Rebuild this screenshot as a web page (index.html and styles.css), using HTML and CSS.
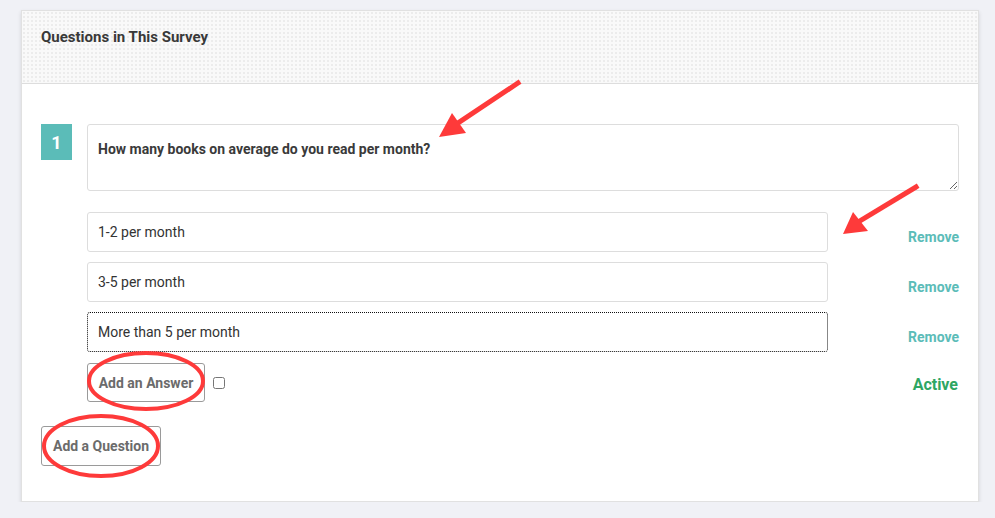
FILE: index.html
```html
<!DOCTYPE html>
<html lang="en">
<head>
    <meta charset="UTF-8">
    <meta name="viewport" content="width=device-width, initial-scale=1.0">
    <title>Questions in This Survey</title>
    <link rel="stylesheet" href="styles.css">
</head>
<body>
    <div class="card">
        <div class="card-header">
            <h2>Questions in This Survey</h2>
        </div>

        <div class="card-body">
            <!-- Question 1 -->
            <div class="question">
                <div class="number">1</div>
                <textarea class="question-text">How many books on average do you read per month?</textarea>
            </div>

            <div class="answers">
                <div class="answer">
                    <input type="text" value="1-2 per month">
                    <a href="#" class="remove">Remove</a>
                </div>
                <div class="answer">
                    <input type="text" value="3-5 per month">
                    <a href="#" class="remove">Remove</a>
                </div>
                <div class="answer">
                    <input type="text" class="focused" value="More than 5 per month">
                    <a href="#" class="remove">Remove</a>
                </div>
                <div class="answer-actions">
                    <button type="button" class="btn">Add an Answer</button>
                    <input type="checkbox" class="check">
                    <span class="active">Active</span>
                </div>
            </div>

            <button type="button" class="btn btn-question">Add a Question</button>
        </div>
    </div>

    <!-- annotations -->
    <svg class="marks" width="995" height="518" viewBox="0 0 995 518">
        <g stroke="#fe3a3a" stroke-width="5" stroke-linecap="square" fill="none">
            <line x1="518" y1="83" x2="455" y2="125"/>
            <line x1="916" y1="187" x2="858" y2="222"/>
        </g>
        <g fill="#fe3a3a">
            <polygon points="439,137 452,113 466,133"/>
            <polygon points="843,234 853,212 868,231"/>
        </g>
        <g stroke="#fe3a3a" stroke-width="4" fill="none">
            <ellipse cx="146" cy="381" rx="57" ry="28"/>
            <ellipse cx="101" cy="446" rx="57" ry="30"/>
        </g>
    </svg>
</body>
</html>
```
FILE: styles.css
```css
body {
    font-family: Roboto, "Liberation Sans", sans-serif;
    background-color: #f0f1f6;
    color: #333333;
    margin: 0;
    padding: 10px 0 0 21px;
}

.card {
    width: 956px;
    background-color: #ffffff;
    border: 1px solid #e1e1e1;
    box-shadow: 0 2px 4px rgba(0, 0, 0, 0.12);
}

.card-header {
    height: 72px;
    border-bottom: 1px solid #dddddd;
    background-color: #f9f9f9;
    background-image: radial-gradient(#ececec 1px, transparent 1px);
    background-size: 4px 4px;
    padding: 0 19px;
}

.card-header h2 {
    margin: 0;
    padding-top: 17px;
    font-size: 15px;
    font-weight: bold;
    line-height: 18px;
    color: #393939;
}

.card-body {
    padding: 40px 19px 35px 19px;
}

.question {
    display: flex;
    gap: 15px;
}

.number {
    width: 31px;
    height: 36px;
    background-color: #5bbcb8;
    color: #ffffff;
    font-size: 18px;
    font-weight: bold;
    display: flex;
    align-items: center;
    justify-content: center;
}

.question-text {
    flex: 1;
    height: 67px;
    box-sizing: border-box;
    border: 1px solid #dddddd;
    border-radius: 3px;
    padding: 16px 10px;
    font-family: inherit;
    font-size: 14px;
    font-weight: bold;
    color: #3a3a3a;
    resize: vertical;
    margin: 0;
}

.answers {
    margin: 21px 0 0 46px;
    display: flex;
    flex-direction: column;
    gap: 10px;
}

.answer {
    display: flex;
    align-items: center;
}

.answer input {
    width: 741px;
    height: 40px;
    box-sizing: border-box;
    border: 1px solid #dddddd;
    border-radius: 3px;
    padding: 0 10px;
    font-family: inherit;
    font-size: 14px;
    color: #333333;
    margin: 0;
}

.answer input.focused {
    border: 1px dotted #111111;
}

.remove {
    margin-left: auto;
    padding-top: 9px;
    color: #5bbcb8;
    font-size: 14px;
    font-weight: bold;
    text-decoration: none;
}

.answer-actions {
    display: flex;
    align-items: center;
    margin-top: 1px;
}

.btn {
    height: 39px;
    width: 118px;
    padding: 0;
    background-color: #ffffff;
    border: 1px solid #9a9a9a;
    border-radius: 3px;
    font-family: inherit;
    font-size: 14px;
    font-weight: bold;
    color: #6b6b6b;
    cursor: pointer;
}

.check {
    width: 12px;
    height: 12px;
    margin: 0 0 0 8px;
}

.active {
    margin-left: auto;
    padding-top: 4px;
    color: #2ea663;
    font-size: 16px;
    font-weight: bold;
    padding-right: 1px;
}

.btn-question {
    margin-top: 24px;
    height: 40px;
    width: 120px;
}

.marks {
    position: absolute;
    left: 0;
    top: 0;
    pointer-events: none;
}
```
